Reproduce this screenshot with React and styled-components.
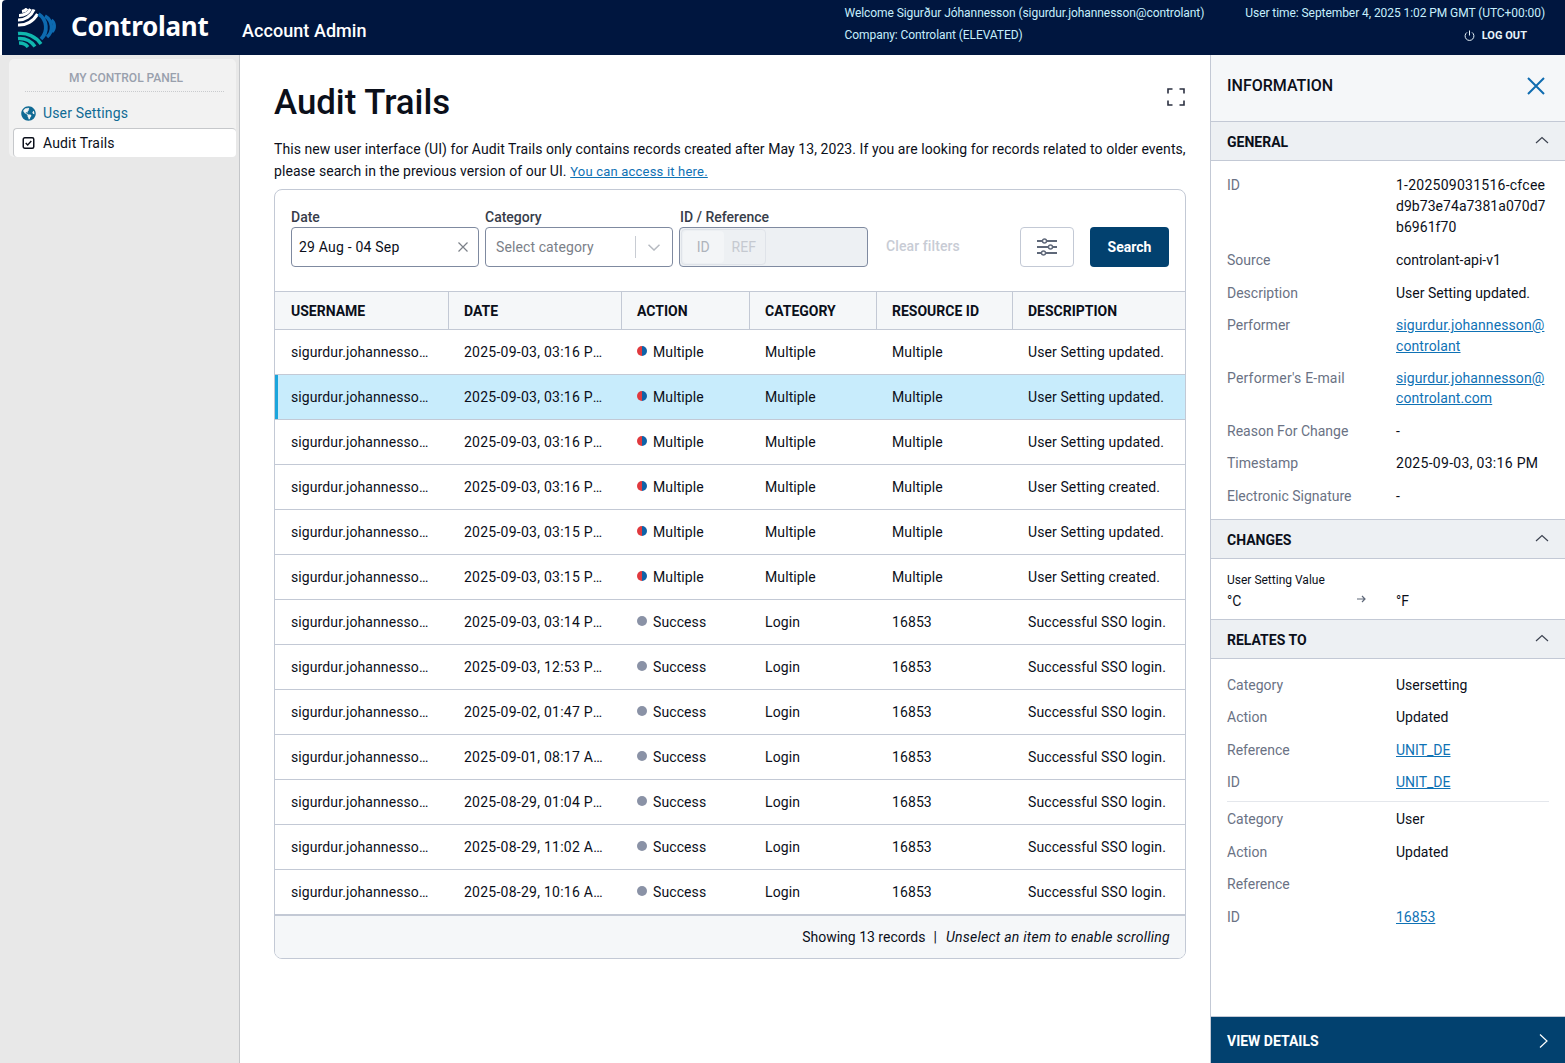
import React from "react";
import styled, { createGlobalStyle } from "styled-components";
import { FaGlobeAmericas } from "react-icons/fa";

const GlobalStyle = createGlobalStyle`
  html, body {
    margin: 0;
    padding: 0;
    background: #fff;
    font-family: Roboto, "Liberation Sans", sans-serif;
    color: #0b0f1a;
  }
  * { box-sizing: border-box; }
`;

const Page = styled.div`
  width: 1565px;
  height: 1063px;
  overflow: hidden;
  display: flex;
  flex-direction: column;
  background: #fff;
`;

const Header = styled.header`
  height: 55px;
  margin-left: 2px;
  flex: none;
  display: flex;
  background: #00163f;
  border-top-left-radius: 4px;
  color: #fff;
`;
const Brand = styled.div`
  display: flex;
  align-items: center;
  padding-left: 15px;
  width: 240px;
`;
const BrandName = styled.span`
  font-family: "Noto Sans", sans-serif;
  font-weight: 700;
  font-size: 26px;
  letter-spacing: -0.25px;
  margin-left: 14px;
  margin-top: -3px;
`;
const AppName = styled.div`
  font-size: 18px;
  font-weight: 500;
  letter-spacing: 0.06px;
  line-height: 61px;
`;
const UserBlock = styled.div`
  margin-left: auto;
  display: flex;
  gap: 41px;
  padding: 3px 20px 0 0;
  font-size: 12px;
  line-height: 21.5px;
  color: #c6effd;
  letter-spacing: -0.07px;
`;
const UserCol = styled.div`
  display: flex;
  flex-direction: column;
`;
const LogOut = styled.div`
  display: flex;
  align-items: center;
  justify-content: flex-end;
  gap: 7px;
  padding-right: 18px;
  font-size: 11px;
  font-weight: 700;
  letter-spacing: 0.03px;
  color: #e8f4fa;
  height: 22px;
`;

const Body = styled.div`
  flex: 1;
  display: flex;
  min-height: 0;
`;

const Sidebar = styled.aside`
  width: 240px;
  flex: none;
  background: #e8e8e8;
  border-right: 1px solid #c4c6c9;
  padding: 4px 3px 0 9px;
`;
const SideCard = styled.nav`
  background: #f2f2f2;
  border-radius: 5px;
  height: 98px;
  padding-top: 12px;
`;
const SideTitle = styled.div`
  margin: 0 12px 0 16px;
  padding: 0 0 5px 3px;
  border-bottom: 1px dotted #c9cbce;
  text-align: center;
  font-size: 12px;
  font-weight: 500;
  line-height: 15px;
  color: #99a0ad;
`;
const SideLink = styled.div`
  display: flex;
  align-items: center;
  gap: 7px;
  height: 29px;
  margin-left: 4px;
  padding-left: 7px;
  font-size: 14px;
  letter-spacing: 0.15px;
  border-radius: 4px;
  color: ${(p) => (p.$active ? "#0b0f1a" : "#0f6a94")};
  background: ${(p) => (p.$active ? "#fff" : "transparent")};
  border-top: 1px solid ${(p) => (p.$active ? "#c6c8cb" : "transparent")};
  border-left: 1px solid ${(p) => (p.$active ? "#c6c8cb" : "transparent")};
  margin-top: ${(p) => (p.$active ? "1px" : "6px")};
`;

const Main = styled.main`
  flex: 1;
  min-width: 0;
  padding: 0 24px 0 34px;
`;
const TitleRow = styled.div`
  display: flex;
  justify-content: space-between;
  align-items: flex-start;
  height: 83px;
  padding-top: 25px;
`;
const Title = styled.h1`
  margin: 0;
  font-size: 34.8px;
  font-weight: 500;
  line-height: 44px;
`;
const Expand = styled.svg`
  margin: 8px 1px 0 0;
`;
const Notice = styled.p`
  margin: 0 0 6px;
  font-size: 14px;
  line-height: 22px;
  letter-spacing: 0.065px;
`;
const TextLink = styled.a`
  color: #0f72b5;
  text-decoration: underline;
  font-size: ${(p) => p.$size || "inherit"};
  letter-spacing: ${(p) => p.$spacing || "inherit"};
`;

const Card = styled.section`
  border: 1px solid #c3c9d5;
  border-radius: 8px;
  overflow: hidden;
`;
const Filters = styled.div`
  height: 101px;
  padding: 19px 16px 0;
  display: flex;
  align-items: flex-start;
`;
const Field = styled.div`
  width: ${(p) => p.$w}px;
  margin-right: 6px;
`;
const FieldLabel = styled.div`
  font-size: 14px;
  font-weight: 500;
  line-height: 16px;
  padding: 0 0 2px ${(p) => p.$indent || 0}px;
  color: #373d4a;
`;
const InputBox = styled.div`
  height: 40px;
  border: 1px solid #7f8aa0;
  border-radius: 4px;
  display: flex;
  align-items: center;
  font-size: 14px;
  padding: ${(p) => p.$pad || "0 10px 0 7px"};
  background: ${(p) => p.$bg || "#fff"};
`;
const Placeholder = styled.span`
  color: #7b8088;
  padding-left: 3px;
  letter-spacing: 0.1px;
  flex: 1;
`;
const Value = styled.span`
  flex: 1;
  letter-spacing: 0.2px;
`;
const SelectDivider = styled.span`
  width: 1px;
  height: 22px;
  background: #c8ccd3;
  margin-right: 12px;
`;
const Toggle = styled.div`
  display: flex;
  height: 36px;
  width: 85px;
  border: 1px solid #dfe3e9;
  border-radius: 4px;
  padding: 1px;
`;
const ToggleItem = styled.div`
  flex: 1;
  display: flex;
  align-items: center;
  justify-content: center;
  border-radius: 4px;
  font-size: 14px;
  color: ${(p) => (p.$on ? "#aeb3bb" : "#c5c9d0")};
  background: ${(p) => (p.$on ? "#f3f5f7" : "transparent")};
`;
const ClearFilters = styled.div`
  margin: 29px 0 0 12px;
  width: 134px;
  font-size: 14px;
  font-weight: 500;
  letter-spacing: 0.1px;
  line-height: 17px;
  color: #c8ccd5;
`;
const IconButton = styled.button`
  width: 54px;
  height: 40px;
  margin-top: 18px;
  background: #fff;
  border: 1px solid #c3c9d5;
  border-radius: 4px;
  display: flex;
  align-items: center;
  justify-content: center;
  padding: 0;
`;
const SearchButton = styled.button`
  width: 79px;
  height: 40px;
  margin: 18px 0 0 16px;
  border: 0;
  border-radius: 4px;
  background: #02416f;
  color: #fff;
  font-family: inherit;
  font-size: 14px;
  font-weight: 700;
`;

const Row = styled.div`
  display: grid;
  grid-template-columns: 173px 173px 128px 127px 136px 173px;
  height: ${(p) => (p.$head ? "38px" : "45px")};
  border-top: 1px solid #c3c9d5;
  background: ${(p) => (p.$head ? "#f5f7f9" : p.$selected ? "#c8ecfc" : "#fff")};
  font-size: 14px;
  letter-spacing: 0.1px;
  box-shadow: ${(p) => (p.$selected ? "inset 3px 0 0 #1ba5dc" : "none")};
`;
const HeadCell = styled.div`
  display: flex;
  align-items: center;
  padding-left: 15px;
  font-weight: 700;
  font-size: 14px;
  letter-spacing: 0;
  color: #0b0f1a;
  border-left: 1px solid #c3c9d5;
  &:first-child {
    border-left: 0;
    padding-left: 16px;
  }
`;
const Cell = styled.div`
  display: flex;
  align-items: center;
  padding-left: 16px;
  white-space: nowrap;
  min-width: 0;
`;
const Clip = styled.span`
  display: block;
  overflow: hidden;
  text-overflow: ellipsis;
  width: ${(p) => p.$w}px;
  letter-spacing: ${(p) => p.$spacing || "inherit"};
`;
const Dot = styled.span`
  width: 10px;
  height: 10px;
  border-radius: 50%;
  margin: -2px 6px 0 0;
  flex: none;
  background: ${(p) =>
    p.$multi
      ? "linear-gradient(90deg, #e0393e 0 50%, #0f62a8 50% 100%)"
      : "#8a92a6"};
`;
const Footer = styled.div`
  height: 44px;
  border-top: 2px solid #c3c9d5;
  background: #f5f7f9;
  display: flex;
  align-items: center;
  justify-content: flex-end;
  padding-right: 15px;
  font-size: 14px;
  gap: 8px;
`;
const FooterNote = styled.em`
  font-style: italic;
  letter-spacing: 0.25px;
  margin-left: 1px;
`;

const Panel = styled.aside`
  width: 355px;
  flex: none;
  border-left: 1px solid #c3c9d5;
  display: flex;
  flex-direction: column;
`;
const PanelHead = styled.div`
  height: 67px;
  flex: none;
  background: #f5f7f9;
  display: flex;
  align-items: center;
  justify-content: space-between;
  padding: 0 20px 5px 16px;
  font-size: 16px;
  font-weight: 500;
  border-bottom: 1px solid #c3c9d5;
`;
const SectionHead = styled.div`
  height: ${(p) => (p.$top ? "40px" : "39px")};
  flex: none;
  background: #edf0f3;
  border-bottom: 1px solid #c3c9d5;
  border-top: ${(p) => (p.$top ? "1px solid #c3c9d5" : "0")};
  display: flex;
  align-items: center;
  justify-content: space-between;
  padding: 1px 16px 0;
  font-size: 14px;
  font-weight: 700;
`;
const Chevron = styled.svg`
  margin-top: -3px;
`;
const Props = styled.dl`
  margin: 0 16px;
  padding: ${(p) => p.$pad || "14px 0 13px"};
  display: grid;
  grid-template-columns: 169px 1fr;
  row-gap: 12.25px;
  font-size: 14px;
  line-height: 20.25px;
  border-bottom: ${(p) => (p.$line ? "1px solid #e4e7ec" : "0")};
`;
const Key = styled.dt`
  color: #6a7284;
  letter-spacing: ${(p) => p.$spacing || "0"};
`;
const Val = styled.dd`
  margin: 0;
  white-space: nowrap;
  letter-spacing: ${(p) => p.$spacing || "0"};
  line-height: ${(p) => p.$line || "inherit"};
`;
const WideLine = styled.span`
  letter-spacing: 0.25px;
`;
const ChangeBox = styled.div`
  height: 60px;
  padding: 13px 16px 0;
`;
const ChangeLabel = styled.div`
  font-size: 12px;
  line-height: 17px;
`;
const ChangeRow = styled.div`
  display: grid;
  grid-template-columns: 128px 41px 1fr;
  font-size: 14px;
  line-height: 24px;
`;
const ChangeArrow = styled.svg`
  margin-left: 2px;
`;
const Details = styled.div`
  margin-top: auto;
  height: 47px;
  flex: none;
  background: #02416f;
  border-top: 1px solid #c3c9d5;
  color: #fff;
  font-size: 14px;
  font-weight: 700;
  display: flex;
  align-items: center;
  justify-content: space-between;
  padding: 1px 17px 0 16px;
`;

const Logo = () => (
  <svg width="40" height="40" viewBox="0 0 40 40" fill="none">
    <g stroke="#fff" strokeWidth="3.1">
      <path d="M1 17 A21 21 0 0 0 20.5 6" />
      <path d="M1 12 A17 17 0 0 0 17 1.5" />
      <path d="M2 7.5 A13 13 0 0 0 13.5 1" />
      <path d="M5 3.5 A7 7 0 0 0 10 0.5" />
    </g>
    <g stroke="#0d6ab0">
      <path d="M21.5 6 A16 16 0 0 1 24 31" strokeWidth="3.8" />
      <path d="M28 8 A13 13 0 0 1 30 29" strokeWidth="3.4" />
      <path d="M34.5 12 A8 8 0 0 1 35 24" strokeWidth="3" />
    </g>
    <g stroke="#10b7ae" strokeWidth="3.4">
      <path d="M1 25.5 A25 25 0 0 1 24 36" />
      <path d="M1 30.5 A19 19 0 0 1 18 38.5" />
      <path d="M2 35 A11 11 0 0 1 11 39" />
    </g>
  </svg>
);

const ChevronUp = () => (
  <Chevron width="14" height="8" viewBox="0 0 14 8" fill="none">
    <path d="M1 7 L7 1.5 L13 7" stroke="#3d4350" strokeWidth="1.2" />
  </Chevron>
);

const CheckIcon = () => (
  <svg width="15" height="14" viewBox="0 0 14 14" fill="none">
    <rect x="1.75" y="1.75" width="10.5" height="10.5" rx="1.5" stroke="#0b0f1a" strokeWidth="1.5" />
    <path d="M4.2 7 L6.2 9 L9.8 5" stroke="#0b0f1a" strokeWidth="1.4" />
  </svg>
);

const SlidersIcon = () => (
  <svg width="20" height="18" viewBox="0 0 20 18" fill="none" stroke="#5f6879" strokeWidth="1.8">
    <path d="M0 3 H5.5 M9.5 3 H20 M0 9 H11.5 M15.5 9 H20 M0 15 H4.5 M8.5 15 H20" />
    <circle cx="7.5" cy="3" r="2" strokeWidth="1.4" />
    <circle cx="13.5" cy="9" r="2" strokeWidth="1.4" />
    <circle cx="6.5" cy="15" r="2" strokeWidth="1.4" />
  </svg>
);

const columns = ["USERNAME", "DATE", "ACTION", "CATEGORY", "RESOURCE ID", "DESCRIPTION"];

const multi = (date, description) => ({
  date,
  multi: true,
  action: "Multiple",
  category: "Multiple",
  resource: "Multiple",
  description,
});
const login = (date) => ({
  date,
  action: "Success",
  category: "Login",
  resource: "16853",
  description: "Successful SSO login.",
});

const records = [
  multi("2025-09-03, 03:16 PM", "User Setting updated."),
  { ...multi("2025-09-03, 03:16 PM", "User Setting updated."), selected: true },
  multi("2025-09-03, 03:16 PM", "User Setting updated."),
  multi("2025-09-03, 03:16 PM", "User Setting created."),
  multi("2025-09-03, 03:15 PM", "User Setting updated."),
  multi("2025-09-03, 03:15 PM", "User Setting created."),
  login("2025-09-03, 03:14 PM"),
  login("2025-09-03, 12:53 PM"),
  login("2025-09-02, 01:47 PM"),
  login("2025-09-01, 08:17 AM"),
  login("2025-08-29, 01:04 PM"),
  login("2025-08-29, 11:02 AM"),
  login("2025-08-29, 10:16 AM"),
];

export default function App() {
  return (
    <Page>
      <GlobalStyle />
      <Header>
        <Brand>
          <Logo />
          <BrandName>Controlant</BrandName>
        </Brand>
        <AppName>Account Admin</AppName>
        <UserBlock>
          <UserCol>
            <span>Welcome Sigurður Jóhannesson (sigurdur.johannesson@controlant)</span>
            <span>Company: Controlant (ELEVATED)</span>
          </UserCol>
          <UserCol>
            <span>User time: September 4, 2025 1:02 PM GMT (UTC+00:00)</span>
            <LogOut>
              <svg width="11" height="12" viewBox="0 0 11 12" fill="none" stroke="#e8f4fa" strokeWidth="1">
                <path d="M5.5 0.5 V5.5" />
                <path d="M3 2.4 A4.4 4.4 0 1 0 8 2.4" />
              </svg>
              LOG OUT
            </LogOut>
          </UserCol>
        </UserBlock>
      </Header>
      <Body>
        <Sidebar>
          <SideCard>
            <SideTitle>MY CONTROL PANEL</SideTitle>
            <SideLink>
              <FaGlobeAmericas size={15} color="#0f6a94" />
              User Settings
            </SideLink>
            <SideLink $active>
              <CheckIcon />
              Audit Trails
            </SideLink>
          </SideCard>
        </Sidebar>
        <Main>
          <TitleRow>
            <Title>Audit Trails</Title>
            <Expand width="18" height="18" viewBox="0 0 18 18" fill="none" stroke="#2b3040" strokeWidth="1.6">
              <path d="M1 5.5 V1 H5.5 M12.5 1 H17 V5.5 M17 12.5 V17 H12.5 M5.5 17 H1 V12.5" />
            </Expand>
          </TitleRow>
          <Notice>
            This new user interface (UI) for Audit Trails only contains records created after May 13, 2023. If you are looking for records related to older events, please search in the previous version of our UI.{" "}
            <TextLink $size="13px" $spacing="0.2px">You can access it here.</TextLink>
          </Notice>
          <Card>
            <Filters>
              <Field $w={188}>
                <FieldLabel>Date</FieldLabel>
                <InputBox>
                  <Value>29 Aug - 04 Sep</Value>
                  <svg width="10" height="10" viewBox="0 0 10 10" stroke="#7b8088" strokeWidth="1.2">
                    <path d="M0.5 0.5 L9.5 9.5 M9.5 0.5 L0.5 9.5" />
                  </svg>
                </InputBox>
              </Field>
              <Field $w={188}>
                <FieldLabel>Category</FieldLabel>
                <InputBox $pad="0 12px 0 7px">
                  <Placeholder>Select category</Placeholder>
                  <SelectDivider />
                  <svg width="12" height="7" viewBox="0 0 12 7" fill="none" stroke="#b5b9c0" strokeWidth="1.5">
                    <path d="M0.5 0.8 L6 6 L11.5 0.8" />
                  </svg>
                </InputBox>
              </Field>
              <Field $w={189}>
                <FieldLabel $indent={1}>ID / Reference</FieldLabel>
                <InputBox $bg="#edf0f3" $pad="0 1px">
                  <Toggle>
                    <ToggleItem $on>ID</ToggleItem>
                    <ToggleItem>REF</ToggleItem>
                  </Toggle>
                </InputBox>
              </Field>
              <ClearFilters>Clear filters</ClearFilters>
              <IconButton>
                <SlidersIcon />
              </IconButton>
              <SearchButton>Search</SearchButton>
            </Filters>
            <Row $head>
              {columns.map((c) => (
                <HeadCell key={c}>{c}</HeadCell>
              ))}
            </Row>
            {records.map((r, i) => (
              <Row key={i} $selected={r.selected}>
                <Cell>
                  <Clip $w={138}>sigurdur.johannesson@controlant</Clip>
                </Cell>
                <Cell>
                  <Clip $w={139} $spacing="0.25px">{r.date}</Clip>
                </Cell>
                <Cell>
                  <Dot $multi={r.multi} />
                  {r.action}
                </Cell>
                <Cell>{r.category}</Cell>
                <Cell>{r.resource}</Cell>
                <Cell>{r.description}</Cell>
              </Row>
            ))}
            <Footer>
              <span>Showing 13 records</span>
              <span>|</span>
              <FooterNote>Unselect an item to enable scrolling</FooterNote>
            </Footer>
          </Card>
        </Main>
        <Panel>
          <PanelHead>
            INFORMATION
            <svg width="18" height="18" viewBox="0 0 18 18" stroke="#0f6cb0" strokeWidth="2">
              <path d="M1 1 L17 17 M17 1 L1 17" />
            </svg>
          </PanelHead>
          <SectionHead>
            GENERAL
            <ChevronUp />
          </SectionHead>
          <Props>
            <Key>ID</Key>
            <Val $line="21px" $spacing="0.05px">
              <WideLine>1-202509031516-cfcee</WideLine>
              <br />
              d9b73e74a7381a070d7
              <br />
              b6961f70
            </Val>
            <Key>Source</Key>
            <Val>controlant-api-v1</Val>
            <Key>Description</Key>
            <Val>User Setting updated.</Val>
            <Key>Performer</Key>
            <Val $spacing="0.1px">
              <TextLink>
                sigurdur.johannesson@
                <br />
                controlant
              </TextLink>
            </Val>
            <Key $spacing="0.2px">Performer's E-mail</Key>
            <Val $spacing="0.1px">
              <TextLink>
                sigurdur.johannesson@
                <br />
                controlant.com
              </TextLink>
            </Val>
            <Key>Reason For Change</Key>
            <Val>-</Val>
            <Key>Timestamp</Key>
            <Val $spacing="0.3px">2025-09-03, 03:16 PM</Val>
            <Key>Electronic Signature</Key>
            <Val>-</Val>
          </Props>
          <SectionHead $top>
            CHANGES
            <ChevronUp />
          </SectionHead>
          <ChangeBox>
            <ChangeLabel>User Setting Value</ChangeLabel>
            <ChangeRow>
              <span>°C</span>
              <ChangeArrow width="9" height="24" viewBox="0 0 9 24" fill="none" stroke="#5f6879" strokeWidth="1.2">
                <path d="M0 10 H8 M5 7 L8 10 L5 13" />
              </ChangeArrow>
              <span>°F</span>
            </ChangeRow>
          </ChangeBox>
          <SectionHead $top>
            RELATES TO
            <ChevronUp />
          </SectionHead>
          <Props $pad="15.75px 0 8.25px" $line>
            <Key>Category</Key>
            <Val>Usersetting</Val>
            <Key>Action</Key>
            <Val>Updated</Val>
            <Key>Reference</Key>
            <Val>
              <TextLink>UNIT_DE</TextLink>
            </Val>
            <Key>ID</Key>
            <Val>
              <TextLink>UNIT_DE</TextLink>
            </Val>
          </Props>
          <Props $pad="7.5px 0 0">
            <Key>Category</Key>
            <Val>User</Val>
            <Key>Action</Key>
            <Val>Updated</Val>
            <Key>Reference</Key>
            <Val />
            <Key>ID</Key>
            <Val>
              <TextLink>16853</TextLink>
            </Val>
          </Props>
          <Details>
            VIEW DETAILS
            <svg width="9" height="14" viewBox="0 0 9 14" fill="none" stroke="#fff" strokeWidth="1.2">
              <path d="M1 0.5 L8 7 L1 13.5" />
            </svg>
          </Details>
        </Panel>
      </Body>
    </Page>
  );
}
